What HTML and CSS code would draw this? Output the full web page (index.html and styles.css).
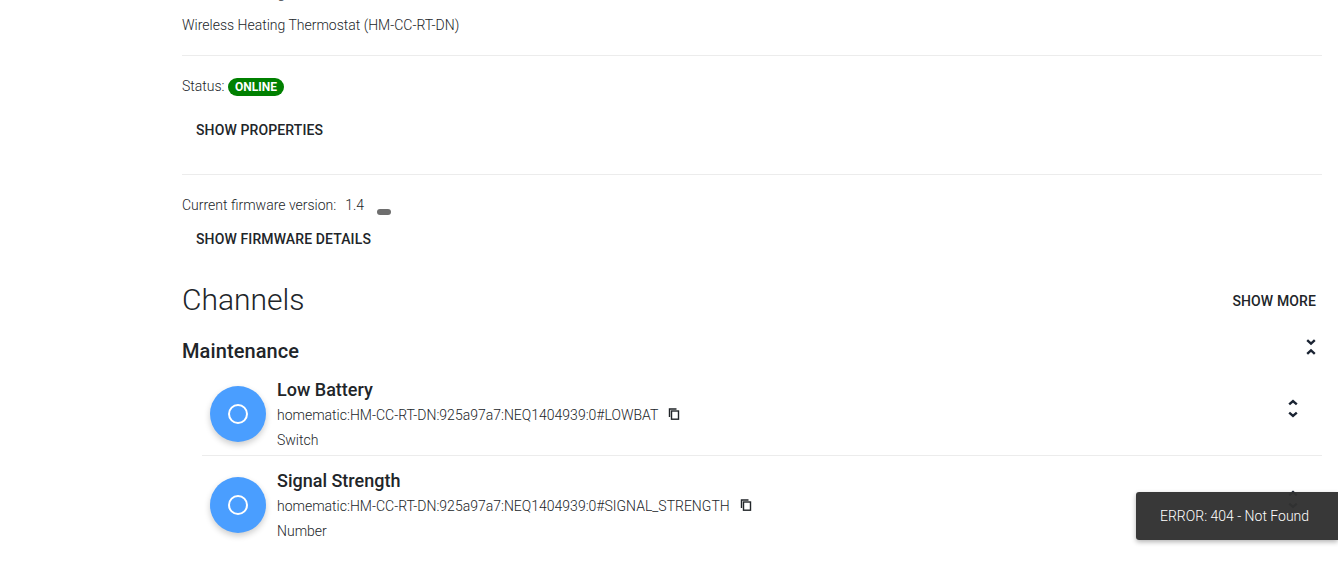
FILE: index.html
```html
<!DOCTYPE html>
<html lang="en">
<head>
<meta charset="utf-8">
<title>Thing</title>
<link rel="stylesheet" href="styles.css">
</head>
<body>
<main class="page">
  <section class="section head">
    <div class="label-top">Wireless Heating Thermostat</div>
    <div class="desc">Wireless Heating Thermostat (HM-CC-RT-DN)</div>
  </section>
  <section class="section status">
    <div class="status-line">Status: <span class="badge">ONLINE</span></div>
    <button class="btn btn-props">SHOW PROPERTIES</button>
  </section>
  <section class="firmware">
    <div class="fw-line"><span>Current firmware version:</span><span class="fw-num">1.4</span><span class="fw-chip"></span></div>
    <button class="btn btn-fw">SHOW FIRMWARE DETAILS</button>
  </section>
  <header class="channels-head">
    <h2>Channels</h2>
    <button class="btn btn-more">SHOW MORE</button>
  </header>
  <div class="group-head">
    <h3>Maintenance</h3>
    <svg class="chev" viewBox="0 0 12 18" width="12" height="18"><path d="M2.2 2.2L6 5.6l3.8-3.4M2.2 15.8L6 12.4l3.8 3.4"/></svg>
  </div>
  <ul class="list">
    <li class="item">
      <span class="avatar"><span class="ring"></span></span>
      <div class="body">
        <div class="name">Low Battery</div>
        <div class="uid">homematic:HM-CC-RT-DN:925a97a7:NEQ1404939:0#LOWBAT<svg class="copy" viewBox="0 0 12 12" width="12" height="12"><path d="M1.5 9V1h7"/><rect x="3.5" y="3" width="7" height="8.2"/></svg></div>
        <div class="type">Switch</div>
      </div>
      <svg class="chev item-chev" viewBox="0 0 12 20" width="12" height="20"><path d="M2.2 5.4L6 2l3.8 3.4M2.2 13.6L6 17l3.8-3.4"/></svg>
    </li>
    <li class="item">
      <span class="avatar"><span class="ring"></span></span>
      <div class="body">
        <div class="name">Signal Strength</div>
        <div class="uid">homematic:HM-CC-RT-DN:925a97a7:NEQ1404939:0#SIGNAL_STRENGTH<svg class="copy" viewBox="0 0 12 12" width="12" height="12"><path d="M1.5 9V1h7"/><rect x="3.5" y="3" width="7" height="8.2"/></svg></div>
        <div class="type">Number</div>
      </div>
      <svg class="chev item-chev" viewBox="0 0 12 20" width="12" height="20"><path d="M2.2 5.4L6 2l3.8 3.4M2.2 13.6L6 17l3.8-3.4"/></svg>
    </li>
  </ul>
</main>
<div class="toast">ERROR: 404 - Not Found</div>
</body>
</html>
```
FILE: styles.css
```css
html, body {
  margin: 0;
  padding: 0;
  height: 562px;
  overflow: hidden;
  background: #fff;
}
body {
  font-family: Roboto, "Liberation Sans", sans-serif;
  font-size: 14px;
  font-weight: 300;
  color: #212529;
}
.page {
  margin: -17px 16px 0 182px;
}
.section {
  border-bottom: 1px solid #ececec;
}
.label-top { line-height: 20px; }
.head { height: 72px; }
.desc { margin-top: 12px; line-height: 20px; }
.status { height: 118px; }
.status-line { padding-top: 20px; line-height: 20px; height: 20px; }
.badge {
  display: inline-block;
  background: #008000;
  color: #fff;
  font-weight: 700;
  font-size: 12px;
  line-height: 18px;
  padding: 0 7px;
  border-radius: 9px;
  vertical-align: 0;
}
.btn {
  display: block;
  border: 0;
  background: none;
  padding: 0 14px;
  font: 500 14px/20px Roboto, sans-serif;
  letter-spacing: .12px;
  color: #212529;
}
.btn-props { margin-top: 24px; }
.firmware { padding-top: 20px; }
.fw-line { display: flex; line-height: 20px; height: 20px; }
.fw-num { margin-left: 9px; }
.fw-chip {
  width: 14px;
  height: 6px;
  border-radius: 3px;
  background: #6e6e6e;
  margin: 14px 0 0 13px;
}
.btn-fw { margin-top: 14px; }
.channels-head {
  display: flex;
  justify-content: space-between;
  align-items: center;
  margin-top: 30px;
  height: 42px;
}
.channels-head h2 {
  margin: 0;
  font-weight: 300;
  font-size: 30px;
  line-height: 42px;
}
.btn-more { padding: 0 6px 0 0; margin-top: 2px; }
.group-head {
  display: flex;
  justify-content: space-between;
  margin-top: 18px;
  height: 26px;
}
.group-head h3 {
  margin: 0;
  font-weight: 500;
  font-size: 20px;
  line-height: 24px;
  letter-spacing: .1px;
}
.chev { fill: none; stroke: #1b2433; stroke-width: 2.4; }
.group-head .chev { margin: -1px 5px 0 0; }
.list { list-style: none; margin: 0 0 0 20px; padding: 0; }
.item {
  display: flex;
  align-items: flex-start;
  box-sizing: border-box;
  height: 91px;
  padding: 21px 0 0 8px;
  border-bottom: 1px solid #ececec;
}
.item:last-child { border-bottom: 0; }
.avatar {
  flex: none;
  width: 56px;
  height: 56px;
  border-radius: 50%;
  background: #4a9eff;
  box-shadow: 0 3px 6px rgba(0,0,0,.2);
  display: flex;
  align-items: center;
  justify-content: center;
}
.ring {
  width: 20px;
  height: 20px;
  box-sizing: border-box;
  border: 2px solid #fff;
  border-radius: 50%;
}
.body { flex: 1; margin: -8px 0 0 11px; }
.name { font-weight: 500; font-size: 18px; line-height: 24px; }
.uid { font-size: 14px; line-height: 20px; margin-top: 3px; }
.copy { fill: none; stroke: #212529; stroke-width: 1.4; margin-left: 10px; }
.type { font-size: 14px; line-height: 20px; margin-top: 5px; }
.item-chev { margin: 13px 23px 0 0; }
.toast {
  position: absolute;
  left: 1136px;
  top: 492px;
  width: 202px;
  height: 48px;
  box-sizing: border-box;
  padding: 0 0 0 24px;
  background: rgba(50,50,50,.97);
  color: #fff;
  line-height: 48px;
  border-radius: 3px 0 0 3px;
  box-shadow: 0 2px 5px rgba(0,0,0,.3);
}
```
